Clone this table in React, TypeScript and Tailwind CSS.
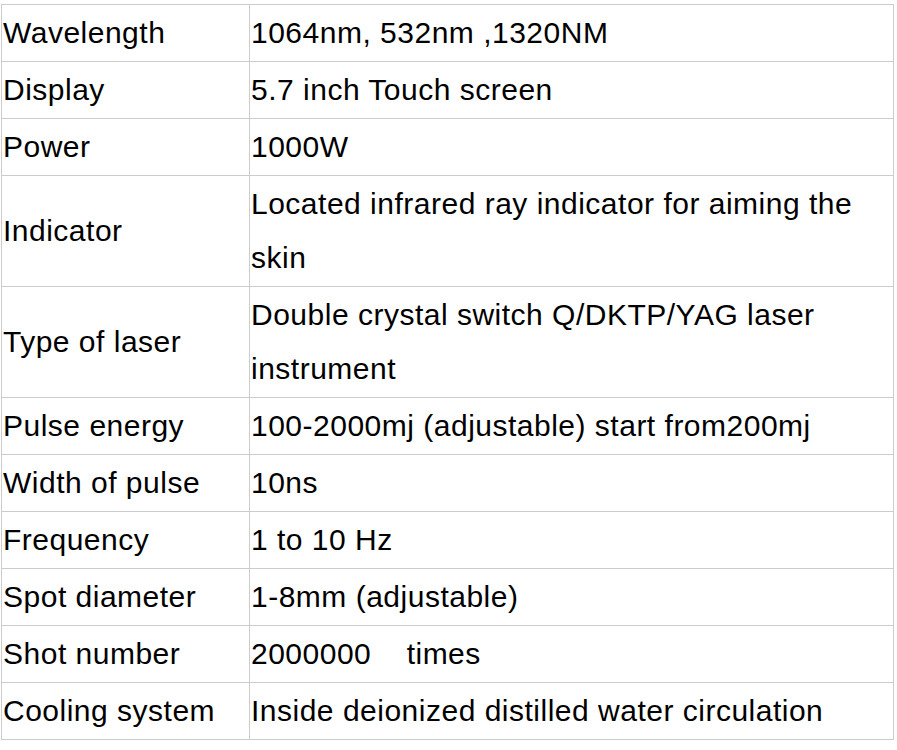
import React from "react";

const rows: [string, string][] = [
  ["Wavelength", "1064nm, 532nm ,1320NM"],
  ["Display", "5.7 inch Touch screen"],
  ["Power", "1000W"],
  ["Indicator", "Located infrared ray indicator for aiming the skin"],
  ["Type of laser", "Double crystal switch Q/DKTP/YAG laser instrument"],
  ["Pulse energy", "100-2000mj (adjustable) start from200mj"],
  ["Width of pulse", "10ns"],
  ["Frequency", "1 to 10 Hz"],
  ["Spot diameter", "1-8mm (adjustable)"],
  ["Shot number", "2000000\u00a0\u00a0\u00a0\u00a0times"],
  ["Cooling system", "Inside deionized distilled water circulation"],
];

export default function App() {
  return (
    <div className="w-[897px] h-[750px] bg-white pt-[4px] pl-[1px]" style={{ fontFamily: '"Liberation Sans", Arial, sans-serif' }}>
      <table className="border-collapse w-[893px] text-[30px] leading-[54px] tracking-[0.5px] text-black">
        <tbody>
          {rows.map(([k, v]) => (
            <tr key={k}>
              <td className="border border-[#cccccc] w-[248px] py-[1px] pl-[1px] pr-[2px] align-middle">{k}</td>
              <td className="border border-[#cccccc] py-[1px] pl-[1px] pr-[2px] align-middle">{v}</td>
            </tr>
          ))}
        </tbody>
      </table>
    </div>
  );
}
